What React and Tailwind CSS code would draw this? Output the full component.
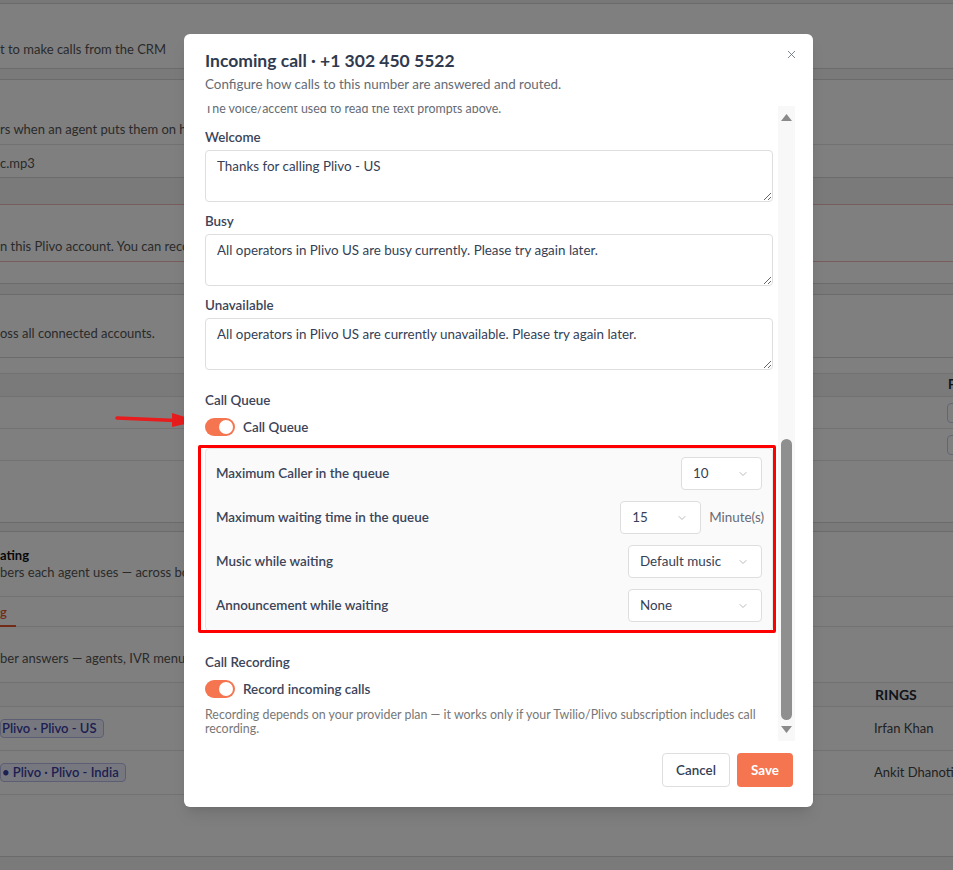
import { ChevronDown, X } from "lucide-react";

function Toggle() {
  return (
    <span className="relative inline-flex h-[18px] w-[30px] shrink-0 items-center rounded-full bg-[#f4754f]">
      <span className="absolute right-[2px] h-[14px] w-[14px] rounded-full bg-white" />
    </span>
  );
}

function Select({ value, width }) {
  return (
    <div
      className={`flex h-[33px] ${width} items-center justify-between rounded-[4px] border border-[#dedede] bg-white pl-[11px] pr-[12px] text-[13.4px] text-[#353f55]`}
    >
      <span>{value}</span>
      <ChevronDown size={12} strokeWidth={1.5} className="text-[#a3a3a3]" />
    </div>
  );
}

function Field({ label, value }) {
  return (
    <div>
      <div className="h-[18px] text-[13.4px] font-semibold leading-[18px] text-[#3b4459]">{label}</div>
      <textarea
        readOnly
        defaultValue={value}
        className="mt-[4px] block h-[52px] w-full rounded-[4px] border border-[#dedede] bg-white px-[11px] py-[6px] text-[13.4px] leading-[18px] text-[#353f55] outline-none"
      />
    </div>
  );
}

function QueueRow({ label, children }) {
  return (
    <div className="flex h-[33px] items-center justify-between">
      <span className="text-[13.4px] font-semibold text-[#3b4459]">{label}</span>
      {children}
    </div>
  );
}

function PageBehind() {
  return (
    <div className="w-full text-[13px] text-[#555]">
      <div className="h-[4px] border-b border-[#d6d6d6] bg-[#f1f1f1]" />
      <div className="h-[64px] pt-[35px] leading-[20px]">t to make calls from the CRM</div>
      <div className="h-[12px] border-y border-[#d6d6d6] bg-[#f4f4f4]" />
      <div className="h-[65px] border-b border-[#e4e4e4] pt-[39px] leading-[20px]">rs when an agent puts them on hold and waits for them to return.</div>
      <div className="h-[33px] border-b border-[#d6d6d6] pt-[8px] leading-[20px]">c.mp3</div>
      <div className="h-[26px] bg-[#f4f4f4]" />
      <div className="h-[58px] border-y border-[#f2b8b8] pt-[31px] leading-[20px]">n this Plivo account. You can reconnect it from the integrations page.</div>
      <div className="h-[21px]" />
      <div className="h-[12px] border-y border-[#d6d6d6] bg-[#f4f4f4]" />
      <div className="h-[62px] pt-[28px] leading-[20px]">oss all connected accounts.</div>
      <div className="h-[16px] border-t border-[#d6d6d6]" />
      <div className="flex h-[24px] items-center justify-end border-y border-[#e4e4e4] bg-[#f5f5f5]">
        <span className="w-[5px] overflow-hidden text-[13px] font-bold text-[#1f2937]">F</span>
      </div>
      <div className="flex h-[32px] items-center justify-end border-b border-[#e4e4e4]">
        <span className="-mr-[10px] h-[20px] w-[16px] rounded-[4px] border border-[#c9cbe0] bg-white" />
      </div>
      <div className="flex h-[32px] items-center justify-end border-b border-[#e4e4e4]">
        <span className="-mr-[10px] h-[20px] w-[16px] rounded-[4px] border border-[#c9cbe0] bg-white" />
      </div>
      <div className="h-[61px]" />
      <div className="h-[10px] border-y border-[#d6d6d6] bg-[#f4f4f4]" />
      <div className="h-[64px] pt-[15px]">
        <div className="text-[13px] font-bold leading-[17px] text-[#111]">ating</div>
        <div className="leading-[17px]">bers each agent uses — across both providers.</div>
      </div>
      <div className="h-[30px] border-t border-[#e4e4e4]">
        <span className="inline-block h-[30px] w-[16px] border-b-2 border-[#e4572e] pt-[5px] font-semibold leading-[20px] text-[#e4572e]">
          g
        </span>
      </div>
      <div className="h-[56px] border-t border-[#e4e4e4] pt-[21px] leading-[20px]">ber answers — agents, IVR menu, voicemail.</div>
      <div className="flex h-[25px] items-center justify-end border-y border-[#e4e4e4] bg-[#fafafa] pr-[25px]">
        <span className="w-[53px] text-[14px] font-bold text-[#1f2937]">RINGS</span>
      </div>
      <div className="flex h-[44px] items-center justify-between border-b border-[#e4e4e4]">
        <span className="rounded-[4px] border border-[#b9bde8] bg-[#eef0ff] pr-[6px] pl-[1px] text-[13px] font-semibold leading-[17px] text-[#3b3fa6]">
          Plivo · Plivo - US
        </span>
        <span className="w-[79px] text-[13px] text-[#444]">Irfan Khan</span>
      </div>
      <div className="flex h-[44px] items-center justify-between border-b border-[#e4e4e4]">
        <span className="rounded-[4px] border border-[#b9bde8] bg-[#eef0ff] pr-[6px] pl-[1px] text-[13px] font-semibold leading-[17px] text-[#3b3fa6]">
          • Plivo · Plivo - India
        </span>
        <span className="w-[79px] overflow-hidden whitespace-nowrap text-[13px] text-[#444]">Ankit Dhanotia</span>
      </div>
      <div className="h-[61px]" />
      <div className="h-[20px] border-t border-[#d6d6d6] bg-[#f4f4f4]" />
    </div>
  );
}

export default function App() {
  return (
    <div className="relative h-[870px] w-full overflow-hidden bg-white font-['Lato',sans-serif]">
      <PageBehind />
      <div className="absolute inset-0 bg-black/50" />

      {/* annotation arrow pointing at the queue toggle */}
      <svg className="absolute left-[114px] top-[408px]" width="88" height="24" viewBox="0 0 88 24">
        <path d="M3 10 L62 12.4" stroke="#e81c1c" strokeWidth="3.5" strokeLinecap="round" />
        <path d="M58 5 L84 13 L58 19 Z" fill="#e81c1c" />
      </svg>

      <div className="absolute left-[184px] top-[34px] flex h-[773px] w-[629px] flex-col rounded-[6px] bg-white shadow-lg">
        <div className="relative h-[72px] shrink-0 px-[21px] pt-[15px]">
          <h2 className="text-[17.5px] font-bold leading-[24px] text-[#2f3a4f]">Incoming call · +1 302 450 5522</h2>
          <p className="mt-[1px] text-[13.4px] leading-[20px] text-[#666b74]">
            Configure how calls to this number are answered and routed.
          </p>
          <button className="absolute right-[15px] top-[14px] text-[#6b7280]">
            <X size={13} strokeWidth={1.6} />
          </button>
        </div>

        <div className="flex h-[635px] shrink-0">
          <div className="flex-1 overflow-hidden pl-[21px] pr-[5px]">
            <div className="-mt-[6px]">
              <p className="text-[12.4px] leading-[18px] text-[#666b74]">
                The voice/accent used to read the text prompts above.
              </p>
              <div className="mt-[10px] flex flex-col gap-[10px]">
                <Field label="Welcome" value="Thanks for calling Plivo - US" />
                <Field label="Busy" value="All operators in Plivo US are busy currently. Please try again later." />
                <Field
                  label="Unavailable"
                  value="All operators in Plivo US are currently unavailable. Please try again later."
                />
              </div>

              <div className="mt-[21px] text-[13.4px] font-semibold leading-[18px] text-[#3b4459]">Call Queue</div>
              <div className="mt-[9px] flex h-[18px] items-center gap-[8px]">
                <Toggle />
                <span className="text-[13.4px] font-semibold text-[#3b4459]">Call Queue</span>
              </div>

              <div className="relative mt-[12px]">
                <div className="flex flex-col gap-[11px] rounded-[4px] border border-[#e6e6e6] bg-[#fafafa] px-[10px] py-[8px]">
                  <QueueRow label="Maximum Caller in the queue">
                    <Select value="10" width="w-[81px]" />
                  </QueueRow>
                  <QueueRow label="Maximum waiting time in the queue">
                    <div className="flex items-center gap-[8px]">
                      <Select value="15" width="w-[81px]" />
                      <span className="-mr-[2px] text-[13.4px] text-[#666b74]">Minute(s)</span>
                    </div>
                  </QueueRow>
                  <QueueRow label="Music while waiting">
                    <Select value="Default music" width="w-[134px]" />
                  </QueueRow>
                  <QueueRow label="Announcement while waiting">
                    <Select value="None" width="w-[134px]" />
                  </QueueRow>
                </div>
                <div className="pointer-events-none absolute -bottom-[2px] -left-[7px] -right-[3px] -top-[3px] rounded-[2px] border-[3px] border-[#ff0000]" />
              </div>

              <div className="mt-[22px] text-[13.4px] font-semibold leading-[18px] text-[#3b4459]">Call Recording</div>
              <div className="mt-[9px] flex h-[18px] items-center gap-[8px]">
                <Toggle />
                <span className="text-[13.4px] font-semibold text-[#3b4459]">Record incoming calls</span>
              </div>
              <p className="mt-[10px] text-[12.4px] leading-[14px] text-[#777]">
                Recording depends on your provider plan — it works only if your Twilio/Plivo subscription includes call
                recording.
              </p>
            </div>
          </div>

          {/* scrollbar */}
          <div className="mr-[18px] flex w-[17px] flex-col items-center bg-[#f8f8f8] py-[8px]">
            <svg width="11" height="7" viewBox="0 0 11 7">
              <path d="M5.5 0 L11 7 L0 7 Z" fill="#8a8a8a" />
            </svg>
            <div className="flex-1" />
            <div className="h-[281px] w-[11px] rounded-full bg-[#8f8f8f]" />
            <div className="h-[6px]" />
            <svg width="11" height="7" viewBox="0 0 11 7">
              <path d="M0 0 L11 0 L5.5 7 Z" fill="#8a8a8a" />
            </svg>
          </div>
        </div>

        <div className="flex flex-1 items-start justify-end gap-[7px] pr-[20px] pt-[12px]">
          <button className="h-[34px] w-[68px] rounded-[4px] border border-[#dedede] bg-white text-[13.4px] font-semibold text-[#353f55]">
            Cancel
          </button>
          <button className="h-[34px] w-[56px] rounded-[4px] bg-[#f4754f] text-[13.4px] font-bold text-white">
            Save
          </button>
        </div>
      </div>
    </div>
  );
}
